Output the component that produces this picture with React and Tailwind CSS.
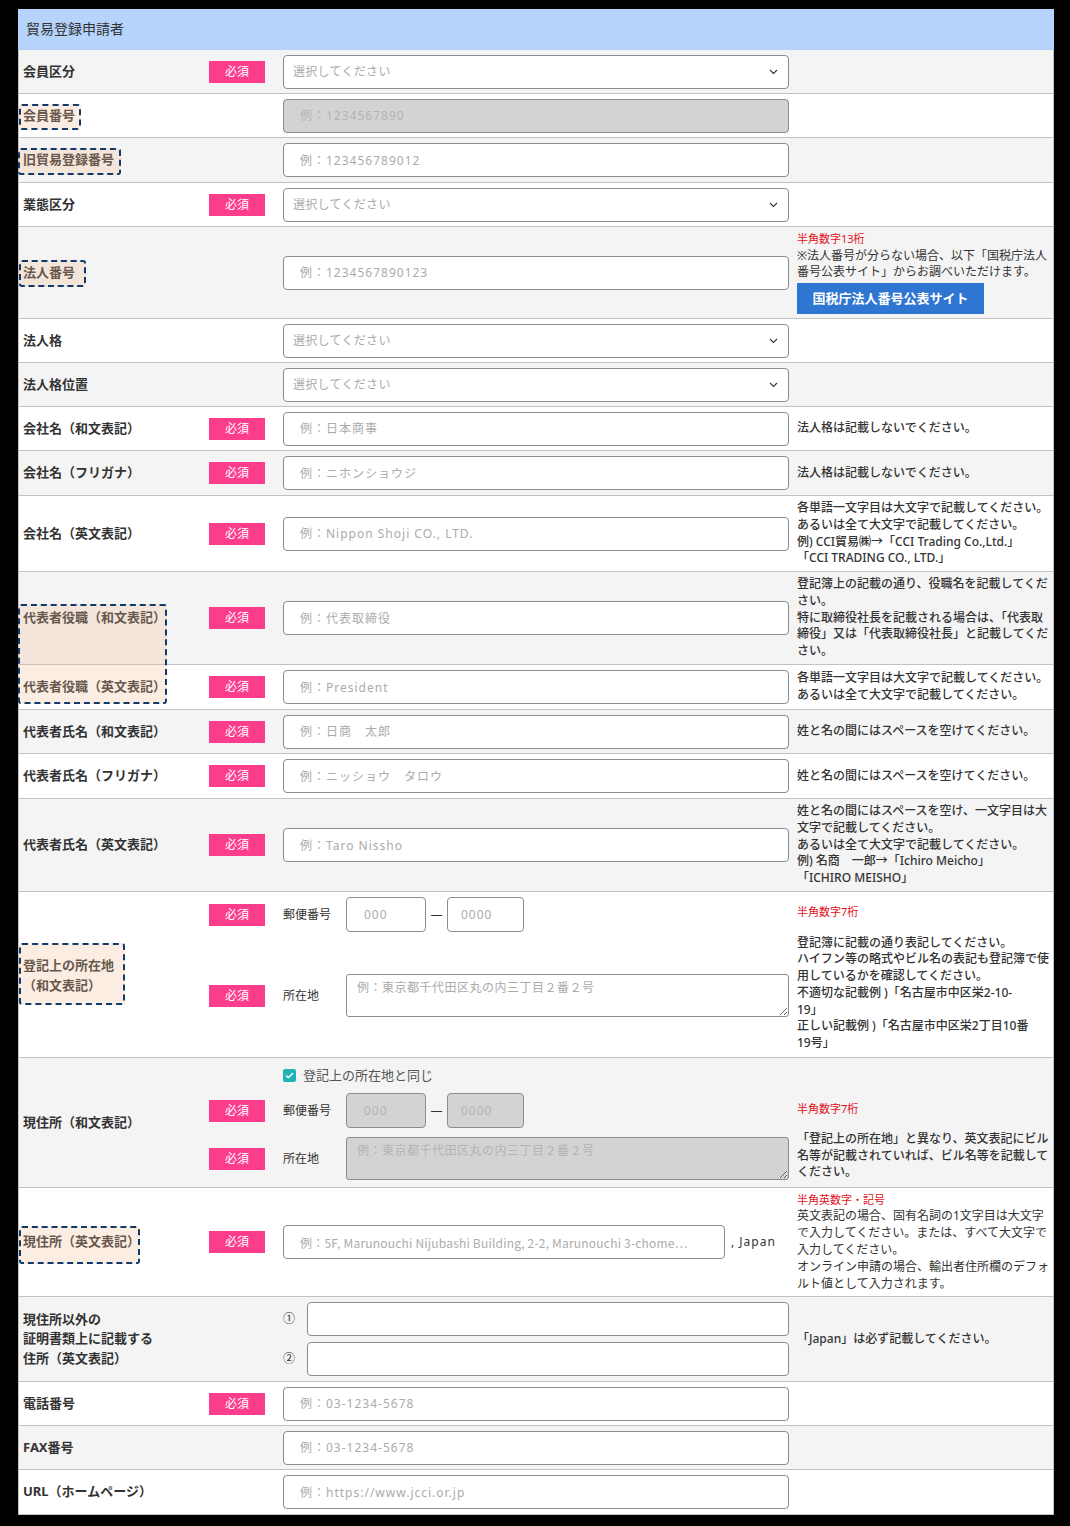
import React from "react";

function Badge() {
  return (
    <span className="ml-[9px] flex h-[22px] w-[56px] items-center justify-center bg-[#fc3d8c] text-[12px] leading-none text-white">
      必須
    </span>
  );
}

function Overlay({ className }) {
  return (
    <span
      className={
        "pointer-events-none absolute z-10 rounded-[3px] border-2 border-dashed border-[#0e3b69] bg-[rgba(239,187,147,0.27)] " +
        className
      }
    />
  );
}

function TextInput({ placeholder, disabled, className = "w-full" }) {
  return (
    <input
      readOnly
      placeholder={placeholder}
      className={
        "h-[34px] rounded-[4px] border border-[#8c8c8c] px-[16px] text-[12px] tracking-[1px] outline-none " +
        (disabled ? "bg-[#d3d3d3] placeholder:text-[#b4b4b4] " : "bg-white placeholder:text-[#ababab] ") +
        className
      }
    />
  );
}

function Select() {
  return (
    <div className="flex h-[34px] w-full items-center justify-between rounded-[4px] border border-[#8c8c8c] bg-white pl-[9px] pr-[10px] text-[12px] tracking-[0.3px] text-[#ababab]">
      <span>選択してください</span>
      <svg width="9" height="6" viewBox="0 0 9 6">
        <path d="M1 1l3.5 3.5L8 1" fill="none" stroke="#333" strokeWidth="1.1" />
      </svg>
    </div>
  );
}

function Red({ children }) {
  return <div className="text-[11px] font-normal text-[#e3101b]">{children}</div>;
}

function Row({ h, gray, label, overlay, required, mid, note, noteClass = "justify-center font-medium" }) {
  return (
    <div
      className={
        "flex border-x border-b border-[#c2c2c2] " + (gray ? "bg-[#f4f4f4] " : "bg-white ") + h
      }
    >
      <div className="relative flex w-[181px] shrink-0 items-center pl-[4px] text-[13px] font-bold leading-[19.5px] text-[#333]">
        <div>{label}</div>
        {overlay}
      </div>
      <div className="flex w-[83px] shrink-0 items-center">{required && <Badge />}</div>
      <div className="flex w-[506px] shrink-0 items-center">{mid}</div>
      <div className={"flex min-w-0 flex-1 flex-col pl-[8px] text-[12px] leading-[16.8px] text-[#333] " + noteClass}>
        {note}
      </div>
    </div>
  );
}

function AddressBlock({ disabled }) {
  return (
    <div className="flex h-[35px] items-center">
      <div className="w-[83px]">
        <Badge />
      </div>
      <span className="w-[63px] text-[12px] text-[#333]">郵便番号</span>
      <TextInput placeholder="000" disabled={disabled} className="h-[35px] w-[80px] !px-[17px]" />
      <span className="w-[21px] text-center text-[12px] text-[#333]">—</span>
      <TextInput placeholder="0000" disabled={disabled} className="h-[35px] w-[77px] !px-[13px]" />
    </div>
  );
}

function AddrArea({ disabled }) {
  return (
    <div className="flex items-center">
      <div className="w-[83px]">
        <Badge />
      </div>
      <span className="w-[63px] text-[12px] text-[#333]">所在地</span>
      <textarea
        readOnly
        placeholder="例：東京都千代田区丸の内三丁目２番２号"
        className={
          "h-[43px] w-[443px] rounded-[3px] border border-[#8c8c8c] px-[10px] pt-[4px] text-[12px] tracking-[0.5px] outline-none " +
          (disabled ? "bg-[#d3d3d3] placeholder:text-[#b4b4b4]" : "bg-white placeholder:text-[#ababab]")
        }
      />
    </div>
  );
}

export default function App() {
  return (
    <div className="h-[1526px] w-[1070px] bg-black pl-[18px] pt-[9px] font-['Noto_Sans','Noto_Sans_CJK_JP',sans-serif]">
      <div className="w-[1036px] bg-white">
        <div className="flex h-[41px] items-center bg-[#b5d3fb] pb-[2px] pl-[8px] text-[14px] text-[#333]">貿易登録申請者</div>

        <Row h="h-[44px]" gray label="会員区分" required mid={<Select />} />
        <Row
          h="h-[44px]"
          label="会員番号"
          overlay={<Overlay className="left-0 top-[10px] h-[26px] w-[62px]" />}
          mid={<TextInput placeholder="例：1234567890" disabled />}
        />
        <Row
          h="h-[45px]"
          gray
          label="旧貿易登録番号"
          overlay={<Overlay className="left-[-1px] top-[10px] h-[27px] w-[103px]" />}
          mid={<TextInput placeholder="例：123456789012" />}
        />
        <Row h="h-[44px]" label="業態区分" required mid={<Select />} />
        <Row
          h="h-[92px]"
          gray
          label="法人番号"
          overlay={<Overlay className="left-0 top-[33px] h-[27px] w-[67px]" />}
          mid={<TextInput placeholder="例：1234567890123" />}
          noteClass="justify-center font-normal"
          note={
            <>
              <Red>半角数字13桁</Red>
              <div className="leading-[16.5px]">
                ※法人番号が分らない場合、以下「国税庁法人
                <br />
                番号公表サイト」からお調べいただけます。
              </div>
              <button className="mt-[2px] h-[31px] w-[187px] bg-[#2f76d2] text-[13px] font-bold text-white">
                国税庁法人番号公表サイト
              </button>
            </>
          }
        />
        <Row h="h-[44px]" label="法人格" mid={<Select />} />
        <Row h="h-[44px]" gray label="法人格位置" mid={<Select />} />
        <Row
          h="h-[44px]"
          label="会社名（和文表記）"
          required
          mid={<TextInput placeholder="例：日本商事" />}
          note={<div>法人格は記載しないでください。</div>}
        />
        <Row
          h="h-[45px]"
          gray
          label="会社名（フリガナ）"
          required
          mid={<TextInput placeholder="例：ニホンショウジ" />}
          note={<div>法人格は記載しないでください。</div>}
        />
        <Row
          h="h-[76px]"
          label="会社名（英文表記）"
          required
          mid={<TextInput placeholder="例：Nippon Shoji CO., LTD." />}
          note={
            <div>
              各単語一文字目は大文字で記載してください。
              <br />
              あるいは全て大文字で記載してください。
              <br />
              例) CCI貿易㈱→「CCI Trading Co.,Ltd.」
              <br />
              「CCI TRADING CO., LTD.」
            </div>
          }
        />
        <Row
          h="h-[93px]"
          gray
          label="代表者役職（和文表記）"
          required
          overlay={<Overlay className="left-[-1px] top-[32px] h-[100px] w-[149px]" />}
          mid={<TextInput placeholder="例：代表取締役" />}
          note={
            <div>
              登記簿上の記載の通り、役職名を記載してくだ
              <br />
              さい。
              <br />
              特に取締役社長を記載される場合は、「代表取
              <br />
              締役」又は「代表取締役社長」と記載してくだ
              <br />
              さい。
            </div>
          }
        />
        <Row
          h="h-[45px]"
          label="代表者役職（英文表記）"
          required
          mid={<TextInput placeholder="例：President" />}
          note={
            <div>
              各単語一文字目は大文字で記載してください。
              <br />
              あるいは全て大文字で記載してください。
            </div>
          }
        />
        <Row
          h="h-[44px]"
          gray
          label="代表者氏名（和文表記）"
          required
          mid={<TextInput placeholder="例：日商　太郎" />}
          note={<div>姓と名の間にはスペースを空けてください。</div>}
        />
        <Row
          h="h-[45px]"
          label="代表者氏名（フリガナ）"
          required
          mid={<TextInput placeholder="例：ニッショウ　タロウ" />}
          note={<div>姓と名の間にはスペースを空けてください。</div>}
        />
        <Row
          h="h-[93px]"
          gray
          label="代表者氏名（英文表記）"
          required
          mid={<TextInput placeholder="例：Taro Nissho" />}
          note={
            <div>
              姓と名の間にはスペースを空け、一文字目は大
              <br />
              文字で記載してください。
              <br />
              あるいは全て大文字で記載してください。
              <br />
              例) 名商　一郎→「Ichiro Meicho」
              <br />
              「ICHIRO MEISHO」
            </div>
          }
        />

        {/* 登記上の所在地 */}
        <div className="flex h-[166px] border-x border-b border-[#c2c2c2] bg-white">
          <div className="relative flex w-[181px] shrink-0 items-center pl-[4px] text-[13px] font-bold leading-[20px] text-[#333]">
            <div>
              登記上の所在地
              <br />
              （和文表記）
            </div>
            <Overlay className="left-0 top-[51px] h-[62px] w-[106px]" />
          </div>
          <div className="flex w-[589px] shrink-0 flex-col pt-[5px]">
            <AddressBlock />
            <div className="mt-[42px]">
              <AddrArea />
            </div>
          </div>
          <div className="flex min-w-0 flex-1 flex-col pl-[8px] pt-[12px] text-[12px] font-medium leading-[16.7px] text-[#333]">
            <Red>半角数字7桁</Red>
            <div className="mt-[14px]">
              登記簿に記載の通り表記してください。
              <br />
              ハイフン等の略式やビル名の表記も登記簿で使
              <br />
              用しているかを確認してください。
              <br />
              不適切な記載例 )「名古屋市中区栄2-10-
              <br />
              19」
              <br />
              正しい記載例 )「名古屋市中区栄2丁目10番
              <br />
              19号」
            </div>
          </div>
        </div>

        {/* 現住所（和文表記） */}
        <div className="flex h-[130px] border-x border-b border-[#c2c2c2] bg-[#f4f4f4]">
          <div className="relative flex w-[181px] shrink-0 items-center pl-[4px] text-[13px] font-bold text-[#333]">
            現住所（和文表記）
          </div>
          <div className="flex w-[589px] shrink-0 flex-col pt-[9px]">
            <div className="flex h-[17px] items-center pl-[83px]">
              <span className="flex h-[13px] w-[13px] items-center justify-center rounded-[2px] bg-[#1fb3b5]">
                <svg width="9" height="7" viewBox="0 0 9 7">
                  <path d="M1 3.5l2.3 2.3L8 1" fill="none" stroke="#fff" strokeWidth="1.4" />
                </svg>
              </span>
              <span className="ml-[7px] text-[13px] text-[#555]">登記上の所在地と同じ</span>
            </div>
            <div className="mt-[9px]">
              <AddressBlock disabled />
            </div>
            <div className="mt-[9px]">
              <AddrArea disabled />
            </div>
          </div>
          <div className="flex min-w-0 flex-1 flex-col pl-[8px] pt-[43px] text-[12px] font-medium leading-[16.8px] text-[#333]">
            <Red>半角数字7桁</Red>
            <div className="mt-[13px]">
              「登記上の所在地」と異なり、英文表記にビル
              <br />
              名等が記載されていれば、ビル名等を記載して
              <br />
              ください。
            </div>
          </div>
        </div>

        <Row
          h="h-[109px]"
          label="現住所（英文表記）"
          required
          overlay={<Overlay className="left-0 top-[38px] h-[38px] w-[121px]" />}
          mid={
            <>
              <TextInput
                placeholder="例：5F, Marunouchi Nijubashi Building, 2-2, Marunouchi 3-chome…"
                className="w-[442px] font-['Noto_Sans_CJK_JP',sans-serif] !tracking-[0.2px]"
              />
              <span className="ml-[6px] text-[12px] tracking-[1px] text-[#333]">, Japan</span>
            </>
          }
          noteClass="justify-center font-normal"
          note={
            <>
              <Red>半角英数字・記号</Red>
              <div>
                英文表記の場合、固有名詞の1文字目は大文字
                <br />
                で入力してください。または、すべて大文字で
                <br />
                入力してください。
                <br />
                オンライン申請の場合、輸出者住所欄のデフォ
                <br />
                ルト値として入力されます。
              </div>
            </>
          }
        />

        {/* 現住所以外 */}
        <div className="flex h-[85px] border-x border-b border-[#c2c2c2] bg-[#f4f4f4]">
          <div className="flex w-[264px] shrink-0 items-center pl-[4px] text-[13px] font-bold leading-[19.5px] text-[#333]">
            <div>
              現住所以外の
              <br />
              証明書類上に記載する
              <br />
              住所（英文表記）
            </div>
          </div>
          <div className="flex w-[506px] shrink-0 flex-col justify-center gap-[6px]">
            <div className="flex items-center">
              <span className="w-[24px] text-[12px] text-[#333]">①</span>
              <TextInput className="w-[482px]" />
            </div>
            <div className="flex items-center">
              <span className="w-[24px] text-[12px] text-[#333]">②</span>
              <TextInput className="w-[482px]" />
            </div>
          </div>
          <div className="flex min-w-0 flex-1 flex-col justify-center pl-[8px] text-[12px] font-medium text-[#333]">
            「Japan」は必ず記載してください。
          </div>
        </div>

        <Row h="h-[44px]" label="電話番号" required mid={<TextInput placeholder="例：03-1234-5678" />} />
        <Row h="h-[44px]" gray label="FAX番号" mid={<TextInput placeholder="例：03-1234-5678" />} />
        <Row h="h-[45px]" label="URL（ホームページ）" mid={<TextInput placeholder="例：https://www.jcci.or.jp" />} />
      </div>
    </div>
  );
}
